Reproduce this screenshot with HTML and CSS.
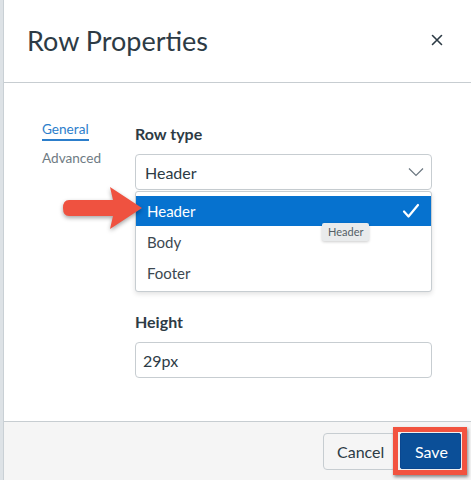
FILE: index.html
```html
<!DOCTYPE html>
<html>
<head>
<meta charset="utf-8">
<link rel="stylesheet" href="styles.css">
</head>
<body>
<div class="modal">
  <div class="header">
    <h1 class="title">Row Properties</h1>
    <span class="close">
      <svg width="12" height="12" viewBox="0 0 12 12"><path d="M1.5 1.5 L10.5 10.5 M10.5 1.5 L1.5 10.5" stroke="#2d3b45" stroke-width="1.6" fill="none" stroke-linecap="round"/></svg>
    </span>
  </div>
  <div class="content">
    <nav class="tabs">
      <span class="tab active">General</span>
      <span class="tab">Advanced</span>
    </nav>
    <div class="form">
      <div class="field">
        <label class="label">Row type</label>
        <div class="select">
          <span>Header</span>
          <svg class="chev" width="16" height="10" viewBox="0 0 16 10"><path d="M1 1.5 L8 8.5 L15 1.5" stroke="#6b7780" stroke-width="1.2" fill="none"/></svg>
        </div>
      </div>
      <div class="field field-height">
        <label class="label">Height</label>
        <div class="input">29px</div>
      </div>
      <div class="menu">
        <div class="opt selected"><span>Header</span>
          <svg width="18" height="16" viewBox="0 0 18 16"><path d="M2 8.5 L6.5 13.5 L16 2" stroke="#fff" stroke-width="2.2" fill="none" stroke-linecap="round" stroke-linejoin="round"/></svg>
        </div>
        <div class="opt">Body</div>
        <div class="opt">Footer</div>
      </div>
      <div class="tooltip">Header</div>
      <svg class="arrow" width="82" height="44" viewBox="0 0 82 44">
        <path d="M6 14 L50 14 L47 1 L79 22 L47 43 L50 30 L6 30 Q0 30 0 22 Q0 14 6 14 Z" fill="#ef5240"/>
      </svg>
    </div>
  </div>
  <div class="footer">
    <button class="btn cancel">Cancel</button>
    <span class="highlight"><button class="btn save">Save</button></span>
  </div>
</div>
</body>
</html>
```
FILE: styles.css
```css
* { box-sizing: border-box; }
html, body { margin: 0; padding: 0; }
body {
  background: #dde2e6;
  font-family: Lato, "Open Sans", sans-serif;
  color: #2d3b45;
  width: 471px;
  height: 480px;
  overflow: hidden;
}
.modal {
  margin-left: 3px;
  height: 480px;
  background: #fff;
  display: flex;
  flex-direction: column;
  border-left: 1px solid #c9d0d5;
}
.header {
  height: 83px;
  flex: none;
  border-bottom: 1px solid #c7cdd1;
  display: flex;
  align-items: center;
  justify-content: space-between;
  padding: 0 28px 0 23px;
}
.title {
  margin: 0;
  font-size: 27px;
  font-weight: 400;
  color: #2d3b45;
  padding-bottom: 2px;
}
.close { display: flex; width: 12px; height: 12px; margin-bottom: 2px; }
.content {
  flex: 1;
  display: flex;
  padding: 38px 0 0 38px;
}
.tabs {
  width: 93px;
  display: flex;
  flex-direction: column;
  gap: 9px;
  flex: none;
  font-size: 13.6px;
}
.tab { color: #6f7b84; line-height: 17px; }
.tab.active {
  color: #2c7ecb;
  align-self: flex-start;
  border-bottom: 2px solid #2c7ecb;
  padding-bottom: 1px;
}
.form {
  position: relative;
  width: 297px;
  padding-top: 3px;
}
.label {
  display: block;
  font-weight: 700;
  font-size: 16px;
  line-height: 20px;
  color: #2d3b45;
}
.select, .input {
  margin-top: 10px;
  height: 36px;
  border: 1px solid #c7cdd1;
  border-radius: 4px;
  display: flex;
  align-items: center;
  justify-content: space-between;
  padding: 0 7px 0 9px;
  font-size: 16px;
  color: #2d3b45;
}
.input { padding-left: 7px; }
.chev { margin-bottom: 1px; }
.field-height { margin-top: 122px; }
.menu {
  position: absolute;
  left: 0;
  top: 70px;
  width: 297px;
  height: 101px;
  background: #fff;
  border: 1px solid #c7cdd1;
  border-radius: 3px;
  box-shadow: 0 2px 5px rgba(0,0,0,0.12);
  padding-top: 4px;
  font-size: 15px;
}
.opt {
  height: 31px;
  display: flex;
  align-items: center;
  justify-content: space-between;
  padding: 0 11px;
  color: #3c4850;
}
.opt.selected {
  height: 30px;
  background: #0672cf;
  color: #fff;
}
.tooltip {
  position: absolute;
  left: 187px;
  top: 102px;
  padding: 2px 6px;
  background: #e9ebec;
  border-radius: 2px;
  box-shadow: 0 1px 3px rgba(0,0,0,0.2);
  font-size: 11px;
  color: #555f66;
  line-height: 14px;
}
.arrow {
  position: absolute;
  left: -72px;
  top: 65px;
  filter: drop-shadow(0 2px 2px rgba(0,0,0,0.35));
}
.footer {
  height: 59px;
  flex: none;
  background: #f5f5f5;
  border-top: 1px solid #c7cdd1;
  display: flex;
  align-items: center;
  justify-content: flex-end;
  padding-right: 4px;
}
.btn {
  font-family: Lato, "Open Sans", sans-serif;
  font-size: 16px;
  height: 37px;
  border-radius: 4px;
  cursor: pointer;
}
.cancel {
  background: #f5f5f5;
  border: 1px solid #c7cdd1;
  color: #2d3b45;
  padding: 0 13px;
  margin-right: -3px;
  width: 73px;
}
.highlight {
  position: relative;
  display: flex;
  border: 5px solid #f2533f;
  box-shadow: 1px 2px 3px rgba(0,0,0,0.45);
  padding: 1px 1px 1px 2px;
  background: #f0f0f0;
}
.save {
  background: #0b4f98;
  border: 1px solid #0a4790;
  color: #fff;
  padding: 0 14px;
  border-radius: 2px;
  height: 36px;
  width: 61px;
}
```
